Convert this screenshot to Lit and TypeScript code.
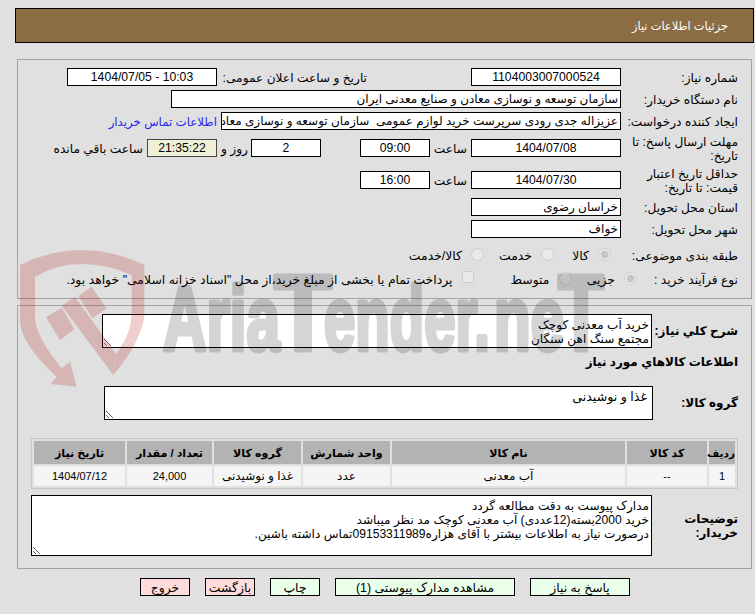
import { LitElement, html, css } from "lit";
import { customElement } from "lit/decorators.js";

@customElement("app-root")
export class AppRoot extends LitElement {
  static styles = css`
    :host {
      display: block;
      position: relative;
      width: 755px;
      height: 614px;
      overflow: hidden;
      background: #e0e0e0;
      font-family: "Liberation Sans", "DejaVu Sans", sans-serif;
      font-size: 12.4px;
      color: #000;
    }
    * { box-sizing: border-box; }
    .page { padding: 8px 1px 0 15px; display: flex; flex-direction: column; }
    .header {
      height: 35px;
      background: #8c6c42;
      border: 1px solid #000;
      color: #fff;
      display: flex;
      align-items: center;
      padding-right: 25px;
      font-size: 11.4px;
    }
    .panel { margin: 16px 2px 0 2px; border: 1px solid #a3a3a3; padding-right: 13px; }
    .p1 { height: 240px; padding-top: 8px; margin-bottom: 6px; }
    .p2 { height: 264px; margin-top: 0; padding-top: 8px; }
    .row { display: flex; align-items: center; height: 18px; margin-top: 4px; }
    .row.first { margin-top: 0; }
    .mt8 { margin-top: 8px; }
    .mt6 { margin-top: 6px; }
    .mt9 { margin-top: 9px; }
    .mt14 { margin-top: 14px; }
    .label { width: 117px; flex: none; line-height: 14px; padding-top: 2px; font-size: 12.2px; }
    .label.short { width: 101px; }
    .field {
      height: 18px;
      border: 1px solid #000;
      background: #fff;
      flex: none;
      line-height: 16px;
      white-space: pre;
      overflow: hidden;
      padding: 0 2px;
      font-size: 12px;
    }
    .field.c { text-align: center; font-size: 12.2px; }
    .w150 { width: 150px; }
    .w70 { width: 70px; }
    .w450 { width: 450px; }
    .w400 { width: 400px; }
    .timer { background: #f0f0d6; border-color: #444; }
    .txt { flex: none; white-space: nowrap; padding-top: 2px; font-size: 12.2px; }
    .pubLabel { width: 150px; margin-right: 104px; }
    .link { margin-right: 4px; color: #2626f0; white-space: nowrap; font-size: 11.8px; padding-top: 2px; }
    .hour { width: 37px; margin-right: 4px; }
    .day { width: 31px; margin-right: 3px; }
    .gap39 { margin-right: 39px; }
    .left4 { margin-right: 4px; }
    .opt { display: flex; align-items: center; flex: none; }
    .o67 { width: 67px; }
    .o70 { width: 70px; }
    .o65 { width: 65.5px; }
    .o98 { width: 98px; }
    input.r, input.k {
      appearance: none;
      margin: -2px 0 0 9px;
      width: 13px;
      height: 13px;
      flex: none;
      background: #e9e9e9;
      border: 1px solid #cdcdcd;
      border-radius: 50%;
      display: block;
    }
    input.r.first { margin-right: 10px; }
    input.r:checked { background: radial-gradient(circle, #c6c6c6 0 3.5px, #ececec 4.5px); }
    input.k { border-radius: 2px; width: 12px; height: 12px; margin: -4px 0 0 9px; }
    textarea {
      display: block;
      flex: none;
      font: inherit;
      font-size: 12.1px;
      border: 1px solid #000;
      background: #fff;
      padding: 3px 2px 1px;
      margin: 0;
      line-height: 14px;
      outline: none;
      overflow: hidden;
      color: #000;
    }
    .t1 { width: 550px; height: 34px; }
    .t2 { width: 549px; height: 34px; padding-right: 5px; font-size: 12.6px; }
    .t3 { width: 621px; height: 61px; }
    .tall { height: 34px; }
    .tall3 { height: 61px; margin-top: 6px; }
    .l86 { width: 86px; flex: none; font-weight: bold; font-size: 12px; line-height: 14px; }
    .l85 { width: 85px; flex: none; font-weight: bold; font-size: 12px; }
    .section { margin-top: 7px; height: 14px; font-weight: bold; font-size: 12px; line-height: 14px; }
    .grow { margin-top: 17px; height: 34px; }
    table {
      margin: 18px 0 0 0;
      width: 707px;
      border: 1px solid #c8c8c8;
      border-spacing: 2px;
      table-layout: fixed;
    }
    td, th { padding: 0; text-align: center; white-space: nowrap; }
    th { background: #b3b3b3; height: 23px; font-weight: bold; font-size: 11.1px; padding-top: 1px; }
    th.tight { font-size: 10.5px; }
    td { background: #f5f5f5; height: 20px; font-size: 12px; }
    td.n { font-size: 11px; }
    .actions { display: flex; gap: 15px; height: 18px; margin-top: 9px; padding-right: 124px; }
    button {
      font: inherit;
      height: 18px;
      border: 1px solid #000;
      padding: 0;
      color: #000;
      background: #eaffea;
      flex: none;
    }
    button.red { background: #ffdcdc; width: 50px; }
    .b50 { width: 50px; }
    .b100 { width: 100px; }
    .b180 { width: 180px; }
    .mark { position: absolute; inset: 0; width: 755px; height: 614px; pointer-events: none; }
    .shield { opacity: 0.19; }
    .shield path, .shield polygon { fill: #b00000; }
    .word { opacity: 0.16; }
    .word text {
      font-family: "Liberation Sans", sans-serif;
      font-weight: bold;
      fill: #000;
      stroke: #000;
      stroke-width: 5px;
      stroke-linejoin: round;
    }
  `;

  render() {
    return html`
      <div class="page" dir="rtl">
        <div class="header">جزئیات اطلاعات نیاز</div>

        <section class="panel p1">
          <div class="row first">
            <div class="label">شماره نیاز:</div>
            <div class="field w150 c">1104003007000524</div>
            <div class="txt pubLabel">تاریخ و ساعت اعلان عمومی:</div>
            <div class="field w150 c" dir="ltr">1404/07/05 - 10:03</div>
          </div>
          <div class="row">
            <div class="label">نام دستگاه خریدار:</div>
            <div class="field w450">سازمان توسعه و نوسازی معادن و صنایع معدنی ایران</div>
          </div>
          <div class="row">
            <div class="label">ایجاد کننده درخواست:</div>
            <div class="field w400">عزیزاله جدی رودی سرپرست خرید لوازم عمومی  سازمان توسعه و نوسازی معادن و صنایع معدنی ایران</div>
            <a class="link">اطلاعات تماس خریدار</a>
          </div>
          <div class="row mt9">
            <div class="label">مهلت ارسال پاسخ: تا تاریخ:</div>
            <div class="field w150 c">1404/07/08</div>
            <div class="txt hour">ساعت</div>
            <div class="field w70 c">09:00</div>
            <div class="field w70 c gap39">2</div>
            <div class="txt day">روز و</div>
            <div class="field w70 c timer">21:35:22</div>
            <div class="txt left4">ساعت باقي مانده</div>
          </div>
          <div class="row mt14">
            <div class="label">حداقل تاریخ اعتبار قیمت: تا تاریخ:</div>
            <div class="field w150 c">1404/07/30</div>
            <div class="txt hour">ساعت</div>
            <div class="field w70 c">16:00</div>
          </div>
          <div class="row mt9">
            <div class="label">استان محل تحویل:</div>
            <div class="field w150">خراسان رضوی</div>
          </div>
          <div class="row">
            <div class="label">شهر محل تحویل:</div>
            <div class="field w150">خواف</div>
          </div>
          <div class="row mt8">
            <div class="label">طبقه بندی موضوعی:</div>
            <label class="opt o67"><input class="r first" type="radio" name="a" checked disabled /><span>کالا</span></label>
            <label class="opt o70"><input class="r" type="radio" name="a" disabled /><span>خدمت</span></label>
            <label class="opt"><input class="r" type="radio" name="a" disabled /><span>کالا/خدمت</span></label>
          </div>
          <div class="row mt6">
            <div class="label short">نوع فرآیند خرید :</div>
            <label class="opt o65"><input class="r" type="radio" name="b" checked disabled /><span>جزیی</span></label>
            <label class="opt o98"><input class="r" type="radio" name="b" disabled /><span>متوسط</span></label>
            <label class="opt"><input class="k" type="checkbox" disabled /><span>پرداخت تمام یا بخشی از مبلغ خرید،از محل "اسناد خزانه اسلامی" خواهد بود.</span></label>
          </div>
        </section>

        <section class="panel p2">
          <div class="row first tall">
            <div class="l86">شرح کلي نیاز:</div>
            <textarea class="t1" dir="rtl" readonly>خرید آب معدنی کوچک
مجتمع سنگ اهن سنگان</textarea>
          </div>
          <div class="section">اطلاعات کالاهاي مورد نیاز</div>
          <div class="row grow">
            <div class="l85">گروه کالا:</div>
            <textarea class="t2" dir="rtl" readonly>غذا و نوشیدنی</textarea>
          </div>
          <table>
            <colgroup>
              <col style="width:26px" /><col style="width:80px" /><col style="width:233px" /><col style="width:87px" /><col style="width:87px" /><col style="width:85px" /><col style="width:91px" />
            </colgroup>
            <thead>
              <tr><th class="tight">ردیف</th><th>کد کالا</th><th>نام کالا</th><th>واحد شمارش</th><th>گروه کالا</th><th>تعداد / مقدار</th><th>تاریخ نیاز</th></tr>
            </thead>
            <tbody>
              <tr><td class="n">1</td><td class="n">--</td><td>آب معدنی</td><td>عدد</td><td>غذا و نوشیدنی</td><td class="n">24,000</td><td class="n">1404/07/12</td></tr>
            </tbody>
          </table>
          <div class="row tall3">
            <div class="l86">توضیحات خریدار:</div>
            <textarea class="t3" dir="rtl" readonly>مدارک پیوست به دقت مطالعه گردد
خرید 2000بسته(12عددی) آب معدنی کوچک مد نظر میباشد
درصورت نیاز به اطلاعات بیشتر با آقای هزاره09153311989تماس داشته باشین.</textarea>
          </div>
        </section>

        <div class="actions">
          <button class="b100">پاسخ به نیاز</button>
          <button class="b180">مشاهده مدارک پیوستی (1)</button>
          <button class="b50">چاپ</button>
          <button class="red">بازگشت</button>
          <button class="red">خروج</button>
        </div>
      </div>

      <svg class="mark" viewBox="0 0 755 614" aria-hidden="true">
        <g class="shield" transform="translate(10 240) scale(.3333)">
          <path d="M30 75 Q120 30 215 30 Q310 30 403 75 L403 230 Q390 310 310 405 L318 342 Q365 280 365 220 L365 105 Q290 72 215 72 Q140 72 75 110 L75 240 Q85 300 155 385 L180 365 L200 440 L122 432 L140 410 Q30 310 30 240 Z" />
          <polygon points="108,232 155,203 193,268 150,300" />
          <polygon points="155,197 195,170 318,342 310,405" />
          <polygon points="205,168 245,140 290,205 247,235" />
        </g>
        <g class="word">
          <text x="163" y="350" font-size="90" textLength="117" lengthAdjust="spacingAndGlyphs">Aria</text>
          <text x="274" y="350" font-size="108" textLength="58" lengthAdjust="spacingAndGlyphs">T</text>
          <text x="324" y="350" font-size="90" textLength="166" lengthAdjust="spacingAndGlyphs">ender.</text>
          <text x="494" y="350" font-size="90" textLength="70" lengthAdjust="spacingAndGlyphs">ne</text>
          <text x="558" y="350" font-size="108" textLength="46" lengthAdjust="spacingAndGlyphs">T</text>
        </g>
      </svg>
    `;
  }
}
